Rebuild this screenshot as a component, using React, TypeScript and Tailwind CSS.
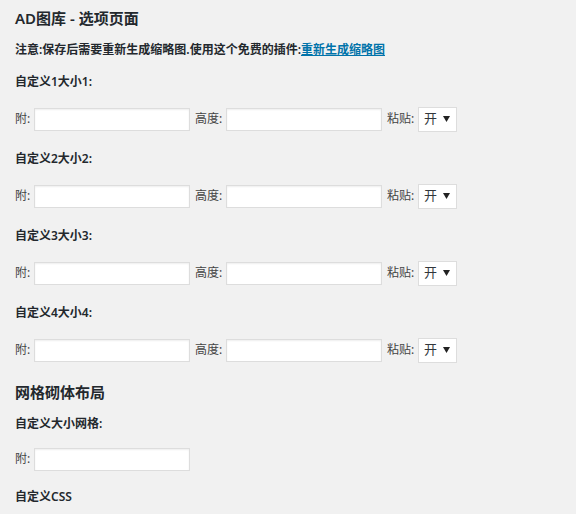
import React from 'react';

const font = { fontFamily: '"Noto Sans", "Noto Sans CJK SC", sans-serif' };

function TextInput() {
  return (
    <div className="h-[23px] w-[156px] border border-[#dddddd] bg-white shadow-[inset_0_1px_2px_rgba(0,0,0,0.07)]" />
  );
}

function PasteSelect() {
  return (
    <div className="flex h-[25px] w-[39px] items-center justify-between border border-[#dddddd] bg-white pl-[5px] pr-[6px] text-[13px] text-[#32373c]">
      <span>开</span>
      <svg width="7" height="6" viewBox="0 0 7 6">
        <path d="M0 0 L7 0 L3.5 6 Z" fill="#222" />
      </svg>
    </div>
  );
}

function SizeGroup({ title, first }: { title: string; first?: boolean }) {
  return (
    <div className={first ? 'mt-[12px]' : 'mt-[17px]'}>
      <div className="h-[20px] text-[12px] font-semibold leading-[20px]">{title}</div>
      <div className="mt-[14px] flex h-[26px] items-center text-[12px] text-[#444]">
        <span className="w-[19px]">附:</span>
        <TextInput />
        <span className="ml-[5px] w-[31px]">高度:</span>
        <TextInput />
        <span className="ml-[5px] w-[31px]">粘贴:</span>
        <PasteSelect />
      </div>
    </div>
  );
}

export default function App() {
  return (
    <div className="min-h-screen bg-[#f1f1f1] px-[15px] pt-[8px] text-[#23282d]" style={font}>
      <h1 className="h-[20px] text-[15px] font-semibold leading-[20px]">AD图库 - 选项页面</h1>

      <p className="mt-[12px] h-[20px] text-[12px] font-semibold leading-[20px]">
        注意:保存后需要重新生成缩略图.使用这个免费的插件:
        <a href="#" className="text-[#0073aa] underline">重新生成缩略图</a>
      </p>

      <SizeGroup title="自定义1大小1:" first />
      <SizeGroup title="自定义2大小2:" />
      <SizeGroup title="自定义3大小3:" />
      <SizeGroup title="自定义4大小4:" />

      <h2 className="mt-[19px] h-[20px] text-[15px] font-semibold leading-[20px]">网格砌体布局</h2>

      <div className="mt-[12px] h-[20px] text-[12px] font-semibold leading-[20px]">自定义大小网格:</div>
      <div className="mt-[12px] flex h-[26px] items-center text-[12px] text-[#444]">
        <span className="w-[19px]">附:</span>
        <TextInput />
      </div>

      <div className="mt-[15px] h-[20px] text-[12px] font-semibold leading-[20px]">自定义CSS</div>
    </div>
  );
}
